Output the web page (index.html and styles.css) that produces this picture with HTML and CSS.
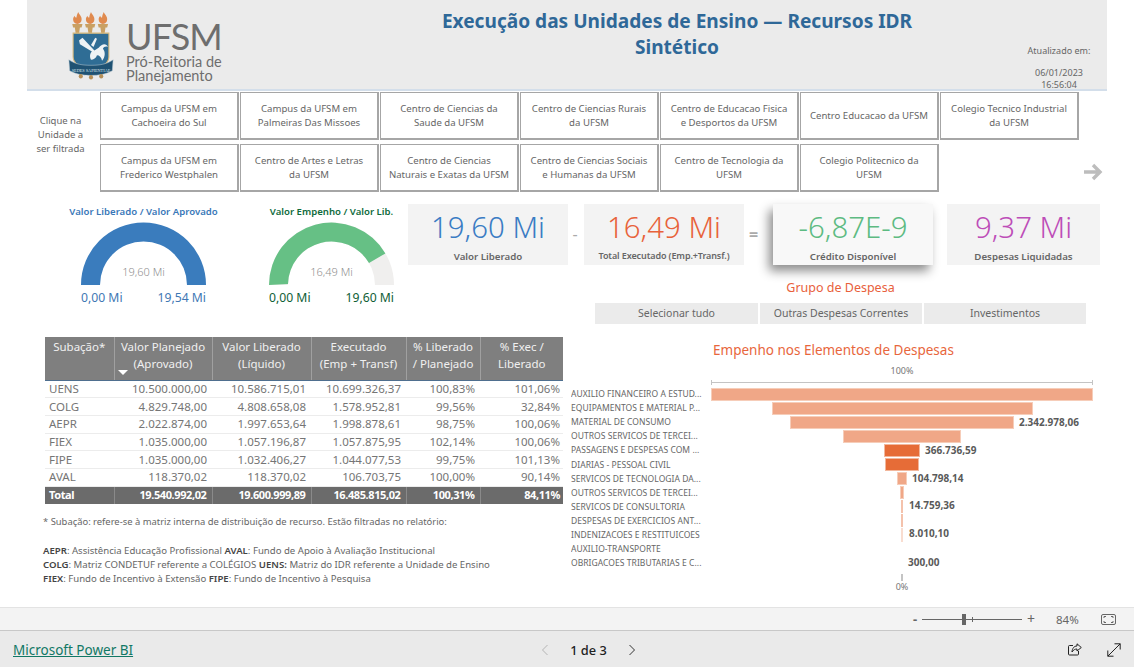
FILE: index.html
```html
<!DOCTYPE html>
<html lang="pt">
<head>
<meta charset="utf-8">
<title>Execução das Unidades de Ensino — Recursos IDR</title>
<link rel="stylesheet" href="styles.css">
</head>
<body>
<div class="page">
  <main class="report">
    <header class="banner">
      <div class="logo">
        <svg class="crest" viewBox="0 0 54 74" width="46" height="68" preserveAspectRatio="none" aria-hidden="true">
          <g fill="#e08a4e">
            <path d="M12 0c1 3 4 4 4 8 0 3-2 5-5 5s-5-2-5-5c0-2 1-3 2-4 0 2 1 2 2 2 0-2 1-4 2-6z"/>
            <path d="M27 0c1 3 4 4 4 8 0 3-2 5-5 5s-5-2-5-5c0-2 1-3 2-4 0 2 1 2 2 2 0-2 1-4 2-6z"/>
            <path d="M42 0c1 3 4 4 4 8 0 3-2 5-5 5s-5-2-5-5c0-2 1-3 2-4 0 2 1 2 2 2 0-2 1-4 2-6z"/>
          </g>
          <g fill="#c9a063">
            <path d="M5 13h12l-1 4h-2l-1 6h-4l-1-6H6z"/>
            <path d="M20 13h12l-1 4h-2l-1 6h-4l-1-6h-2z"/>
            <path d="M35 13h12l-1 4h-2l-1 6h-4l-1-6h-2z"/>
          </g>
          <path d="M6 23h42v26c0 8-10 12-21 15C16 61 6 57 6 49z" fill="#2f6d95" stroke="#d8b878" stroke-width="1.2"/>
          <path d="M13 31l4-3 14 14 5-3c4-5 9-5 11-1-3-1-5 0-6 2 3 3 3 9-1 13-1-4-3-6-6-6-1 3-4 5-7 5-2-4-1-7 1-9L14 35z" fill="#eef3f5"/>
          <path d="M27 36l5-8 2 1-4 9z" fill="#eef3f5"/>
          <path d="M1 52c8 5 16 6 26 6s18-1 26-6l-1 12c-8 4-16 5-25 5S10 68 2 64z" fill="#1f5273" stroke="#b9c9d3" stroke-width=".6"/>
          <text x="27" y="65" class="crest-motto" text-anchor="middle">SEDES SAPIENTIAE</text>
          <g fill="#b58f58"><circle cx="15" cy="70" r="2.4"/><circle cx="27" cy="71" r="2.4"/><circle cx="39" cy="70" r="2.4"/></g>
        </svg>
        <div class="wordmark">
          <div class="wordmark-big">UFSM</div>
          <div class="wordmark-small">Pró-Reitoria de<br>Planejamento</div>
        </div>
      </div>
      <h1 class="title">Execução das Unidades de Ensino — Recursos IDR<br>Sintético</h1>
      <div class="stamp">
        <div class="stamp-label">Atualizado em:</div>
        <div class="stamp-date">06/01/2023<br>16:56:04</div>
      </div>
    </header>

    <section class="filters">
      <div class="filter-hint">Clique na<br>Unidade a<br>ser filtrada</div>
      <div class="filter-grid">
        <div class="filter">Campus da UFSM em<br>Cachoeira do Sul</div>
        <div class="filter">Campus da UFSM em<br>Palmeiras Das Missoes</div>
        <div class="filter">Centro de Ciencias da<br>Saude da UFSM</div>
        <div class="filter">Centro de Ciencias Rurais<br>da UFSM</div>
        <div class="filter">Centro de Educacao Fisica<br>e Desportos da UFSM</div>
        <div class="filter">Centro Educacao da UFSM</div>
        <div class="filter">Colegio Tecnico Industrial<br>da UFSM</div>
        <div class="filter">Campus da UFSM em<br>Frederico Westphalen</div>
        <div class="filter">Centro de Artes e Letras<br>da UFSM</div>
        <div class="filter">Centro de Ciencias<br>Naturais e Exatas da UFSM</div>
        <div class="filter">Centro de Ciencias Sociais<br>e Humanas da UFSM</div>
        <div class="filter">Centro de Tecnologia da<br>UFSM</div>
        <div class="filter">Colegio Politecnico da<br>UFSM</div>
        <div class="arrow-cell">
          <svg width="20" height="18" viewBox="0 0 20 18" aria-hidden="true"><path d="M1 9h16M10 2l7 7-7 7" fill="none" stroke="#bdbdbd" stroke-width="3.4"/></svg>
        </div>
      </div>
    </section>

    <div class="main">
      <div class="left">
        <div class="gauges">
          <div class="gauge">
            <div class="gauge-title gauge-title-blue">Valor Liberado / Valor Aprovado</div>
            <svg class="gauge-arc" width="125" height="63" viewBox="0 0 125 63" aria-hidden="true">
              <path d="M0 63a62.5 62.5 0 0 1 125 0h-19a43.5 43.5 0 0 0-87 0z" fill="#3a7cbd"/>
              <text x="62.5" y="54" text-anchor="middle" class="gauge-value">19,60 Mi</text>
            </svg>
            <div class="gauge-scale gauge-scale-blue"><span>0,00 Mi</span><span>19,54 Mi</span></div>
          </div>
          <div class="gauge">
            <div class="gauge-title gauge-title-green">Valor Empenho / Valor Lib.</div>
            <svg class="gauge-arc" width="125" height="63" viewBox="0 0 125 63" aria-hidden="true">
              <path d="M0 63a62.5 62.5 0 0 1 125 0h-19a43.5 43.5 0 0 0-87 0z" fill="#f0efee"/>
              <path d="M0 63a62.5 62.5 0 0 1 116.4-31.6l-16.4 9.6a43.5 43.5 0 0 0-81 21z" fill="#66c085"/>
              <text x="62.5" y="54" text-anchor="middle" class="gauge-value">16,49 Mi</text>
            </svg>
            <div class="gauge-scale gauge-scale-green"><span>0,00 Mi</span><span>19,60 Mi</span></div>
          </div>
        </div>

        <div class="table-wrap">
          <table class="grid">
            <colgroup>
              <col class="c1"><col class="c2"><col class="c3"><col class="c4"><col class="c5"><col class="c6">
            </colgroup>
            <thead>
              <tr>
                <th class="th-first">Subação*</th>
                <th>Valor Planejado<br>(Aprovado)</th>
                <th>Valor Liberado<br>(Líquido)</th>
                <th>Executado<br>(Emp + Transf)</th>
                <th>% Liberado<br>/ Planejado</th>
                <th>% Exec /<br>Liberado</th>
              </tr>
            </thead>
            <tbody>
              <tr><td>UENS</td><td>10.500.000,00</td><td>10.586.715,01</td><td>10.699.326,37</td><td>100,83%</td><td>101,06%</td></tr>
              <tr><td>COLG</td><td>4.829.748,00</td><td>4.808.658,08</td><td>1.578.952,81</td><td>99,56%</td><td>32,84%</td></tr>
              <tr><td>AEPR</td><td>2.022.874,00</td><td>1.997.653,64</td><td>1.998.878,61</td><td>98,75%</td><td>100,06%</td></tr>
              <tr><td>FIEX</td><td>1.035.000,00</td><td>1.057.196,87</td><td>1.057.875,95</td><td>102,14%</td><td>100,06%</td></tr>
              <tr><td>FIPE</td><td>1.035.000,00</td><td>1.032.406,27</td><td>1.044.077,53</td><td>99,75%</td><td>101,13%</td></tr>
              <tr><td>AVAL</td><td>118.370,02</td><td>118.370,02</td><td>106.703,75</td><td>100,00%</td><td>90,14%</td></tr>
            </tbody>
            <tfoot>
              <tr><td>Total</td><td>19.540.992,02</td><td>19.600.999,89</td><td>16.485.815,02</td><td>100,31%</td><td>84,11%</td></tr>
            </tfoot>
          </table>
          <span class="sort-mark"></span>
        </div>

        <div class="notes">
          <p class="note-lead">* Subação: refere-se à matriz interna de distribuição de recurso. Estão filtradas no relatório:</p>
          <p><b>AEPR</b>: Assistência Educação Profissional <b>AVAL</b>: Fundo de Apoio à Avaliação Institucional</p>
          <p><b>COLG</b>: Matriz CONDETUF referente a COLÉGIOS <b>UENS:</b> Matriz do IDR referente a Unidade de Ensino</p>
          <p><b>FIEX</b>: Fundo de Incentivo à Extensão <b>FIPE</b>: Fundo de Incentivo à Pesquisa</p>
        </div>
      </div>

      <div class="right">
        <div class="kpis">
          <div class="kpi"><div class="kpi-num kpi-blue">19,60 Mi</div><div class="kpi-label">Valor Liberado</div></div>
          <div class="op op-minus">-</div>
          <div class="kpi"><div class="kpi-num kpi-orange">16,49 Mi</div><div class="kpi-label kpi-label-tight">Total Executado (Emp.+Transf.)</div></div>
          <div class="op op-equal">=</div>
          <div class="kpi kpi-raised"><div class="kpi-num kpi-green">-6,87E-9</div><div class="kpi-label">Crédito Disponível</div></div>
          <div class="kpi kpi-last"><div class="kpi-num kpi-purple">9,37 Mi</div><div class="kpi-label">Despesas Liquidadas</div></div>
        </div>

        <div class="slicer">
          <div class="slicer-title">Grupo de Despesa</div>
          <div class="slicer-items">
            <div class="slicer-item">Selecionar tudo</div>
            <div class="slicer-item">Outras Despesas Correntes</div>
            <div class="slicer-item">Investimentos</div>
          </div>
        </div>

        <div class="funnel">
          <div class="funnel-title">Empenho nos Elementos de Despesas</div>
          <div class="funnel-axis-top">
            <div class="axis-label">100%</div>
            <div class="axis-line"></div>
          </div>
          <div class="funnel-rows">
            <div class="f-row"><div class="f-name">AUXILIO FINANCEIRO A ESTUD...</div><div class="f-track"><div class="f-bar" style="width:382px"></div></div></div>
            <div class="f-row"><div class="f-name">EQUIPAMENTOS E MATERIAL P...</div><div class="f-track"><div class="f-bar" style="width:261px"></div></div></div>
            <div class="f-row"><div class="f-name">MATERIAL DE CONSUMO</div><div class="f-track"><div class="f-bar" style="width:224px"><span class="f-val">2.342.978,06</span></div></div></div>
            <div class="f-row"><div class="f-name">OUTROS SERVICOS DE TERCEI...</div><div class="f-track"><div class="f-bar" style="width:118px"></div></div></div>
            <div class="f-row"><div class="f-name">PASSAGENS E DESPESAS COM ...</div><div class="f-track"><div class="f-bar f-dark" style="width:36px"><span class="f-val">366.736,59</span></div></div></div>
            <div class="f-row"><div class="f-name">DIARIAS - PESSOAL CIVIL</div><div class="f-track"><div class="f-bar f-dark" style="width:34px"></div></div></div>
            <div class="f-row"><div class="f-name">SERVICOS DE TECNOLOGIA DA...</div><div class="f-track"><div class="f-bar" style="width:10px"><span class="f-val">104.798,14</span></div></div></div>
            <div class="f-row"><div class="f-name">OUTROS SERVICOS DE TERCEI...</div><div class="f-track"><div class="f-bar" style="width:4px"></div></div></div>
            <div class="f-row"><div class="f-name">SERVICOS DE CONSULTORIA</div><div class="f-track"><div class="f-bar f-pale" style="width:2px"><span class="f-val">14.759,36</span></div></div></div>
            <div class="f-row"><div class="f-name">DESPESAS DE EXERCICIOS ANT...</div><div class="f-track"><div class="f-bar f-pale" style="width:2px"></div></div></div>
            <div class="f-row"><div class="f-name">INDENIZACOES E RESTITUICOES</div><div class="f-track"><div class="f-bar f-paler" style="width:2px"><span class="f-val">8.010,10</span></div></div></div>
            <div class="f-row"><div class="f-name">AUXILIO-TRANSPORTE</div><div class="f-track"><div class="f-bar f-paler" style="width:0"></div></div></div>
            <div class="f-row"><div class="f-name">OBRIGACOES TRIBUTARIAS E C...</div><div class="f-track"><div class="f-bar f-paler" style="width:0"><span class="f-val">300,00</span></div></div></div>
          </div>
          <div class="funnel-axis-bottom">
            <div class="axis-tick"></div>
            <div class="axis-label">0%</div>
          </div>
        </div>
      </div>
    </div>
  </main>

  <div class="zoombar">
    <span class="zoom-minus">-</span>
    <div class="zoom-slider"><span class="zoom-mid"></span><span class="zoom-thumb"></span></div>
    <span class="zoom-plus">+</span>
    <span class="zoom-pct">84%</span>
    <svg class="zoom-fit" width="15" height="11" viewBox="0 0 15 11" aria-hidden="true">
      <rect x=".5" y=".5" width="14" height="10" rx="1.5" fill="none" stroke="#666"/>
      <path d="M3 4V2.5h2M12 4V2.5h-2M3 7v1.5h2M12 7v1.5h-2" fill="none" stroke="#666"/>
    </svg>
  </div>

  <footer class="footer">
    <a class="brand" href="#">Microsoft Power BI</a>
    <nav class="pager">
      <svg width="8" height="12" viewBox="0 0 8 12" aria-hidden="true"><path d="M6.5 1L1.5 6l5 5" fill="none" stroke="#b5b5b5"/></svg>
      <span class="pager-text">1 de 3</span>
      <svg width="8" height="12" viewBox="0 0 8 12" aria-hidden="true"><path d="M1.5 1l5 5-5 5" fill="none" stroke="#333"/></svg>
    </nav>
    <div class="foot-icons">
      <svg width="14" height="13" viewBox="0 0 14 13" aria-hidden="true">
        <path d="M5 2.5H1.5a1 1 0 0 0-1 1v7.500a1 1 0 0 0 1 1h8a1 1 0 0 0 1-1V8" fill="none" stroke="#222"/>
        <path d="M9 .8l4.300 3.700L9 8V6C7 6 5.500 6.800 4 9c.2-3.500 2-6 5-6z" fill="none" stroke="#222"/>
      </svg>
      <svg width="14" height="14" viewBox="0 0 14 14" aria-hidden="true">
        <path d="M.8 13.200L13.200.8M7.500.8h5.700v5.700M.8 7.500v5.700h5.700" fill="none" stroke="#222"/>
      </svg>
    </div>
  </footer>
</div>
</body>
</html>
```
FILE: styles.css
```css
* { box-sizing: border-box; }
html, body { margin: 0; padding: 0; background: #fff; }
body { font-family: "Noto Sans", "Open Sans", sans-serif; color: #666; }
.page { width: 1134px; height: 667px; display: flex; flex-direction: column; overflow: hidden; }
.report { height: 607px; overflow: hidden; }

/* banner */
.banner { width: 1080px; height: 91px; margin-left: 27px; background: #ebebeb; border-bottom: 2px solid #d3deea;
  display: grid; grid-template-columns: 350px 600px 130px; }
.logo { display: flex; padding: 12px 0 0 41px; gap: 12px; }
.crest { flex: none; }
.crest-motto { font-family: "Liberation Serif", serif; font-size: 5px; fill: #dfe8ee; }
.wordmark { color: #6e6e6e; font-family: Lato, "Noto Sans", sans-serif; padding-top: 9px; }
.wordmark-big { font-size: 36px; line-height: 30px; letter-spacing: -.8px; font-weight: 400; }
.wordmark-small { font-size: 14.500px; line-height: 14px; margin-top: 4px; white-space: nowrap; }
.title { margin: 0; padding-top: 8px; text-align: center; color: #2f6898; font-size: 19.100px; line-height: 26px; font-weight: 700; }
.stamp { padding: 45px 0 0 32px; width: 130px; font-size: 9px; color: #666; }
.stamp-label { width: 100px; text-align: center; line-height: 12px; }
.stamp-date { width: 100px; text-align: center; line-height: 11.500px; margin-top: 10px; }

/* filter buttons */
.filters { display: flex; height: 100px; padding-top: 1px; }
.filter-hint { width: 100px; padding: 22px 0 0 21px; font-size: 9.500px; line-height: 14px; text-align: center; white-space: nowrap; }
.filter-grid { display: grid; grid-template-columns: repeat(7, 139px); grid-auto-rows: 48px; column-gap: 1px; row-gap: 4px; }
.filter { border: 1px solid #a6a6a6; border-width: 1px 2px 2px 1px; background: #fff; display: flex; align-items: center; justify-content: center;
  text-align: center; font-size: 9.600px; line-height: 14px; color: #666; white-space: nowrap; }
.arrow-cell { grid-column: 7; display: flex; justify-content: flex-end; align-items: flex-end; }
.arrow-cell svg { margin: 0 -24px 11px 0; }

/* layout */
.main { display: grid; grid-template-columns: 408px 1fr; }

/* gauges */
.gauges { display: flex; padding: 14px 0 0 81px; gap: 63px; height: 146px; align-items: flex-start; }
.gauge { width: 125px; display: flex; flex-direction: column; align-items: center; }
.gauge-title { font-size: 9.600px; font-weight: 600; white-space: nowrap; line-height: 13px; }
.gauge-title-blue { color: #3a78b8; }
.gauge-title-green { color: #0f6b3c; }
.gauge-arc { display: block; margin-top: 4px; }
.gauge-value { font-size: 11px; font-weight: 300; fill: #8f8f8f; font-family: "Noto Sans", sans-serif; }
.gauge-scale { width: 100%; display: flex; justify-content: space-between; font-size: 12.200px; line-height: 14px; margin-top: 6px; white-space: nowrap; }
.gauge-scale-blue { color: #3f78b4; }
.gauge-scale-green { color: #0f5e36; }

/* matrix */
.table-wrap { position: relative; margin-left: 45px; width: 518px; }
.grid { width: 518px; border-collapse: collapse; table-layout: fixed; font-size: 11.500px; }
.c1 { width: 69px; } .c2 { width: 98px; } .c3 { width: 99px; } .c4 { width: 95px; } .c5 { width: 74px; } .c6 { width: 83px; }
.grid th { background: #7f7f7f; color: #f0f0f0; font-weight: 400; height: 43px; padding: 1px 3px 0; vertical-align: top; line-height: 17px; text-align: center;
  border-right: 1px solid #a0a0a0; border-bottom: 1px solid #4f6f8f; white-space: nowrap; font-size: 11.500px; }
.grid th:last-child { border-right: 0; }
.grid tbody td { height: 17.700px; padding: 0 5px 0 0; text-align: right; line-height: 16px; border-bottom: 1px solid #ececec; color: #757575; white-space: nowrap; }
.grid tbody td:last-child, .grid tfoot td:last-child { padding-right: 3px; }
.grid td:first-child { text-align: left; padding-left: 4px; }
.grid tfoot td { height: 18px; padding: 0 5px 0 0; text-align: right; background: #6b6b6b; color: #fff; font-size: 11px; letter-spacing: -.4px; font-weight: 700; border-top: 1px solid #4f6f8f; border-right: 1px solid #8a8a8a; line-height: 16px; white-space: nowrap; }
.grid tfoot td:last-child { border-right: 0; }
.sort-mark { position: absolute; left: 73px; top: 33px; width: 0; height: 0; border-left: 5px solid transparent; border-right: 5px solid transparent; border-top: 5px solid #fff; }

/* notes */
.notes { margin: 11px 0 0 43px; font-size: 9.600px; line-height: 14px; color: #666; white-space: nowrap; }
.notes p { margin: 0; }
.notes b { color: #444; font-weight: 600; }
.notes .note-lead { margin-bottom: 15px; font-size: 9.420px; }

/* kpis */
.kpis { display: flex; padding-top: 13px; height: 88px; }
.kpi { width: 160px; height: 61px; background: #f3f3f3; text-align: center; }
.kpi-last { width: 153px; margin-left: 14px; }
.kpi-raised { background: #f8f8f8; box-shadow: -4px 6px 10px rgba(0, 0, 0, .45); }
.kpi-num { font-size: 29.400px; line-height: 38px; padding-top: 4px; font-weight: 300; height: 42px; white-space: nowrap; }
.kpi-blue { color: #3a7cc4; } .kpi-orange { color: #e8623a; } .kpi-green { color: #5dbb82; } .kpi-purple { color: #bd4db8; }
.kpi-label { font-size: 9.700px; font-weight: 600; color: #666; line-height: 14px; padding-top: 4px; white-space: nowrap; }
.kpi-label-tight { font-size: 9px; letter-spacing: -.1px; padding-top: 3px; }
.op { color: #aaa; font-size: 16px; text-align: center; line-height: 60px; }
.op-minus { width: 16px; padding-right: 2px; }
.op-equal { width: 29px; padding-right: 10px; font-weight: 700; }

/* slicer */
.slicer { margin-left: 187px; width: 491px; }
.slicer-title { text-align: center; color: #e8603c; font-size: 12.500px; line-height: 17px; }
.slicer-items { display: grid; grid-template-columns: 163px 162px 162px; gap: 2px; margin-top: 7px; }
.slicer-item { height: 21px; background: #ebebeb; text-align: center; font-size: 10.500px; line-height: 21px; color: #666; }

/* funnel */
.funnel { margin: 16px 0 0 163px; width: 530px; }
.funnel-title { margin-left: 142px; color: #e8663c; font-size: 13.500px; line-height: 20px; white-space: nowrap; }
.funnel-axis-top { margin: 5px 0 0 140px; width: 382px; }
.axis-label { text-align: center; font-size: 9px; line-height: 12px; color: #777; }
.axis-line { height: 5px; margin-top: 3px; border-left: 1px solid #c4c4c4; border-right: 1px solid #c4c4c4; background: linear-gradient(#c4c4c4, #c4c4c4) center / 100% 1px no-repeat; }
.funnel-rows { margin-top: 2px; }
.f-row { display: grid; grid-template-columns: 140px 382px; height: 14.100px; align-items: center; }
.f-name { font-size: 8.500px; line-height: 14px; color: #666; white-space: nowrap; overflow: hidden; letter-spacing: .05px; }
.f-track { display: flex; justify-content: center; height: 14.100px; padding: .5px 0; }
.f-bar { position: relative; background: #f0a787; border: 1px solid #f6cdb9; height: 100%; }
.f-dark { background: #e66c37; border-color: #f2b79c; }
.f-pale { background: #f4c2ac; border: 0; }
.f-paler { background: #f9ddd0; border: 0; }
.f-val { position: absolute; left: 100%; top: -1px; margin-left: 6px; font-size: 10px; font-weight: 700; line-height: 13px; color: #5a5a5a; white-space: nowrap; }
.funnel-axis-bottom { margin: 4px 0 0 140px; width: 382px; display: flex; flex-direction: column; align-items: center; }
.axis-tick { width: 2px; height: 7px; background: #c4c4c4; }

/* report controls */
.zoombar { height: 24px; background: #f3f3f3; border-top: 1px solid #e3e3e3; border-bottom: 1px solid #c8c8c8; display: flex; align-items: center; padding-left: 913px; color: #666; }
.zoom-minus { width: 9px; font-size: 13px; font-weight: 700; line-height: 16px; }
.zoom-slider { position: relative; width: 100px; height: 1px; background: #666; }
.zoom-thumb { position: absolute; left: 40px; top: -5px; width: 4px; height: 11px; background: #666; }
.zoom-mid { position: absolute; left: 50px; top: -2px; width: 1px; height: 5px; background: #666; }
.zoom-plus { margin-left: 5px; width: 12px; font-size: 14px; line-height: 16px; }
.zoom-pct { margin-left: 17px; width: 30px; font-size: 11.500px; }
.zoom-fit { margin-left: 15px; }
.footer { flex: 1; background: #eaeaea; padding-top: 2px; display: grid; grid-template-columns: 540px 100px 1fr; align-items: center; }
.brand { margin-left: 13px; color: #117865; font-size: 13.500px; white-space: nowrap; text-decoration: underline; }
.pager { display: flex; align-items: center; justify-content: space-between; width: 95px; margin-left: 1px; }
.pager-text { font-size: 12.800px; font-weight: 500; color: #222; }
.foot-icons { display: flex; justify-content: flex-end; gap: 25px; padding-right: 13px; }
```
